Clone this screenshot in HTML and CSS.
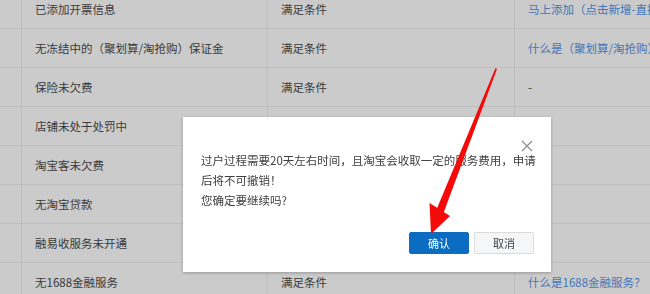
FILE: index.html
```html
<!DOCTYPE html>
<html lang="zh-CN">
<head>
  <meta charset="UTF-8">
  <title>店铺过户</title>
  <link rel="stylesheet" href="styles.css">
</head>
<body>
  <div class="table">
    <div class="row">
      <div class="cell first"></div>
      <div class="cell">已添加开票信息</div>
      <div class="cell">满足条件</div>
      <div class="cell link">马上添加（点击新增-直接添加开票信息）</div>
    </div>
    <div class="row">
      <div class="cell first"></div>
      <div class="cell">无冻结中的（聚划算/淘抢购）保证金</div>
      <div class="cell">满足条件</div>
      <div class="cell link">什么是（聚划算/淘抢购）保证金？</div>
    </div>
    <div class="row">
      <div class="cell first"></div>
      <div class="cell">保险未欠费</div>
      <div class="cell">满足条件</div>
      <div class="cell">-</div>
    </div>
    <div class="row">
      <div class="cell first"></div>
      <div class="cell">店铺未处于处罚中</div>
      <div class="cell">满足条件</div>
      <div class="cell"></div>
    </div>
    <div class="row">
      <div class="cell first"></div>
      <div class="cell">淘宝客未欠费</div>
      <div class="cell">满足条件</div>
      <div class="cell"></div>
    </div>
    <div class="row">
      <div class="cell first"></div>
      <div class="cell">无淘宝贷款</div>
      <div class="cell">满足条件</div>
      <div class="cell"></div>
    </div>
    <div class="row">
      <div class="cell first"></div>
      <div class="cell">融易收服务未开通</div>
      <div class="cell">满足条件</div>
      <div class="cell"></div>
    </div>
    <div class="row">
      <div class="cell first"></div>
      <div class="cell">无1688金融服务</div>
      <div class="cell">满足条件</div>
      <div class="cell link">什么是1688金融服务？</div>
    </div>
  </div>

  <!-- confirm dialog -->
  <div class="dialog">
    <span class="close">
      <svg width="12" height="12" viewBox="0 0 12 12">
        <path d="M1 1L11 11M11 1L1 11" stroke="#8c8c8c" stroke-width="1.2" fill="none"/>
      </svg>
    </span>
    <div class="dialog-body">
      <p>过户过程需要20天左右时间，且淘宝会收取一定的服务费用，申请后将不可撤销！</p>
      <p>您确定要继续吗?</p>
    </div>
    <div class="dialog-footer">
      <button class="btn btn-primary">确认</button>
      <button class="btn">取消</button>
    </div>
  </div>

  <!-- red arrow annotation -->
  <svg class="arrow" width="650" height="294" viewBox="0 0 650 294">
    <polygon points="495.5,68 497,69 443.5,213 436.5,209.5" fill="#f50a0a"/>
    <polygon points="431,234 429.5,203 450,216" fill="#f50a0a"/>
  </svg>
</body>
</html>
```

FILE: styles.css
```css
body {
  margin: 0;
  height: 294px;
  overflow: hidden;
  background-color: #cbcbcb;
  font-family: "Noto Sans CJK SC", "Microsoft YaHei", sans-serif;
  font-size: 11.5px;
  color: #3a3a3a;
}

.table {
  margin-top: -10px;
  width: 650px;
  overflow: hidden;
}

.row {
  display: grid;
  grid-template-columns: 21px 246px 247px 1fr;
  height: 38px;
  border-bottom: 1px solid #bebebe;
}

.cell {
  display: flex;
  align-items: center;
  padding-left: 13px;
  border-left: 1px solid #bebebe;
  white-space: nowrap;
  overflow: hidden;
}

.cell.first {
  border-left: none;
  padding-left: 0;
}

.link {
  color: #4576b8;
}

.dialog {
  position: fixed;
  left: 183px;
  top: 117px;
  width: 368px;
  height: 155px;
  box-sizing: border-box;
  padding: 33px 17px 18px 18px;
  background-color: #fff;
  box-shadow: 0 1px 3px rgba(0, 0, 0, 0.25);
  display: flex;
  flex-direction: column;
}

.close {
  position: absolute;
  right: 18px;
  top: 23px;
  width: 12px;
  height: 12px;
}

.close svg {
  display: block;
}

.dialog-body {
  flex: 1;
  color: #404040;
  line-height: 20px;
  margin-right: -7px;
}

.dialog-body p {
  margin: 0;
}

.dialog-footer {
  display: flex;
  justify-content: flex-end;
  gap: 5px;
}

.btn {
  width: 60px;
  height: 22px;
  padding: 0;
  font-family: inherit;
  font-size: 11px;
  color: #444;
  background-color: #f5f6f7;
  border: 1px solid #dcdcdc;
  border-radius: 2px;
}

.btn-primary {
  color: #fff;
  background-color: #0b6cc1;
  border-color: #0b6cc1;
}

.arrow {
  position: fixed;
  left: 0;
  top: 0;
}
```
